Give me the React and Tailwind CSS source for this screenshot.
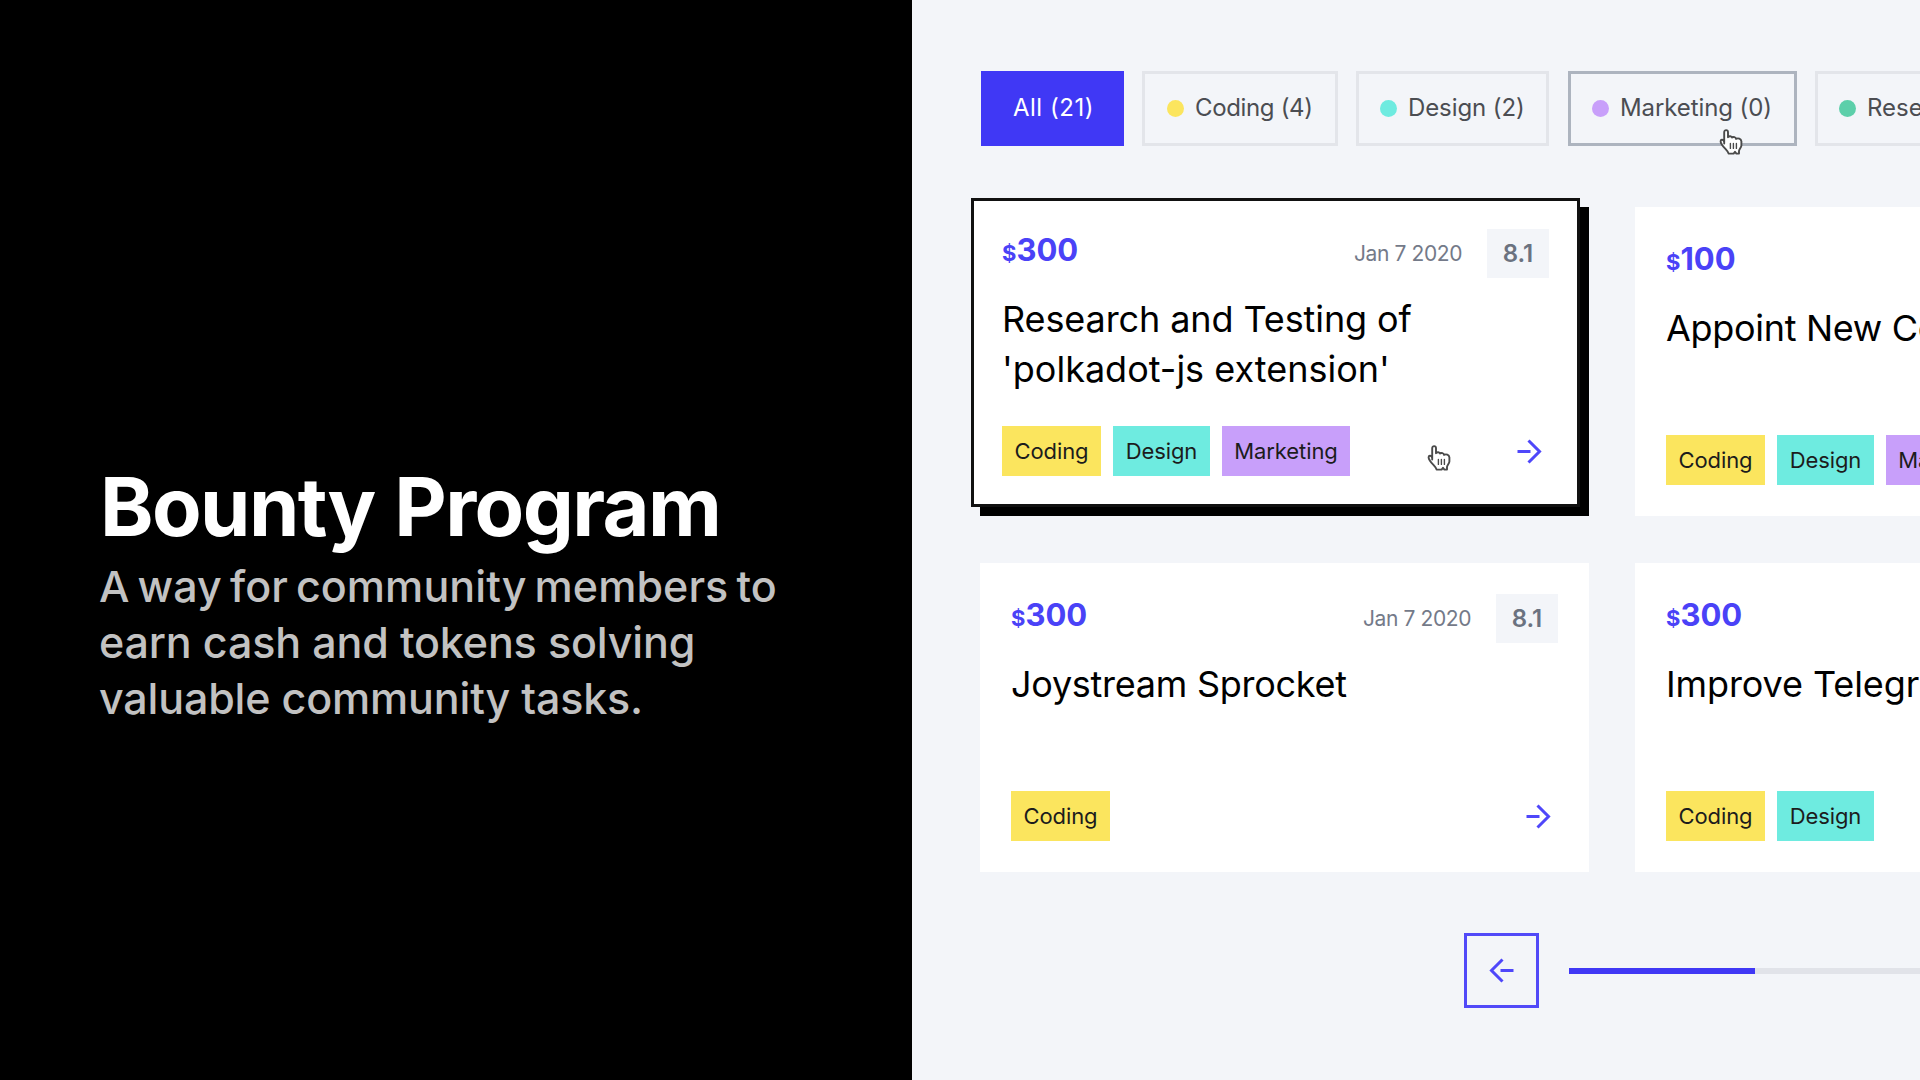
import React from "react";

const TAGS = {
  Coding: "w-[99px] bg-[#fbe55e]",
  Design: "w-[97px] bg-[#6eebe0]",
  Marketing: "w-[128px] bg-[#c89ffa]",
};

const FILTERS = [
  { label: "All (21)", box: "w-[143px] pl-[2px] justify-center bg-[#4038f5] text-white tracking-[0.55px]" },
  { label: "Coding (4)", dot: "bg-[#fbe55e]", box: "w-[196px] pl-[22px] border-[3px] border-[#e3e5ea] tracking-[-0.35px]" },
  { label: "Design (2)", dot: "bg-[#6eebe0]", box: "w-[193px] pl-[21px] border-[3px] border-[#e3e5ea] tracking-[-0.1px]" },
  { label: "Marketing (0)", dot: "bg-[#c89ffa]", box: "w-[229px] ml-px pl-[21px] border-[3px] border-[#adb4bf] tracking-[-0.1px]", hover: true },
  { label: "Research (3)", dot: "bg-[#5ccfaa]", box: "w-[219px] pl-[21px] border-[3px] border-[#e3e5ea]" },
];

const CARDS = [
  {
    amount: "300",
    date: "Jan 7 2020",
    score: "8.1",
    title: "Research and Testing of",
    second: "'polkadot-js extension'",
    tracking: "tracking-[-0.1px]",
    tags: ["Coding", "Design", "Marketing"],
    active: true,
  },
  { amount: "100", title: "Appoint New Council", tracking: "tracking-[-0.3px]", tags: ["Coding", "Design", "Marketing"] },
  { amount: "300", date: "Jan 7 2020", score: "8.1", title: "Joystream Sprocket", tracking: "tracking-[-0.27px]", tags: ["Coding"] },
  { amount: "300", title: "Improve Telegram", tracking: "tracking-[-0.1px]", tags: ["Coding", "Design"] },
];

function Arrow({ className = "" }) {
  return (
    <svg className={className} width="25" height="25" viewBox="0 0 25 25" fill="none" stroke="#4f47fa" strokeWidth="3">
      <path d="M0.5 12.5H13.5" />
      <path d="M11.5 1.5L22.5 12.5L11.5 23.5" />
    </svg>
  );
}

function HandCursor({ className = "" }) {
  return (
    <svg className={className} width="24" height="26" viewBox="0 0 24 26" fill="#fff" stroke="#4a4a4a" strokeWidth="1.9" strokeLinejoin="round" strokeLinecap="round">
      <path d="M5.2 14.5V3.2C5.2 0.4 9 0.4 9 3.2V8.2C10.2 6.6 12.6 7 13 8.6C14.4 7.4 16.8 8 17 9.8C19 8.8 22 9.4 22.4 12.4V16.4C22.4 18.4 20 20.4 20 22V24.6H17.4L16 22.8L14.6 24.6H9.6C9 21.6 5.4 19.6 2.8 15.4C1.4 13.4 1 11 2.8 10.8C4.2 10.7 5 12 5.2 13" />
      <path d="M11.4 14.4V19.4M14.4 14.4V19.4M17.4 14.4V19.4" strokeWidth="1.4" />
    </svg>
  );
}

function Filter({ label, dot, box, hover }) {
  return (
    <button className={`relative flex h-[75px] shrink-0 items-center whitespace-nowrap text-[24px] text-[#4b4d52] ${box}`}>
      {dot && <span className={`mr-[11px] size-[17px] shrink-0 rounded-full ${dot}`} />}
      <span className="pb-[2px]">{label}</span>
      {hover && <HandCursor className="absolute left-[148px] top-[55px]" />}
    </button>
  );
}

function Card({ amount, date, score, title, second, tracking, tags, active }) {
  return (
    <article
      className={`relative flex h-[309px] w-[609px] flex-col bg-white p-[31px] ${
        active ? "-translate-x-[9px] -translate-y-[9px] shadow-[inset_0_0_0_3px_#111,9px_9px_0_0_#000]" : ""
      }`}
    >
      <div className="flex h-[49px] items-start">
        <div className="flex items-baseline font-bold leading-[42px] text-[#4a42f7]">
          <span className="text-[22px]">$</span>
          <span className="text-[31px]">{amount}</span>
        </div>
        {date && (
          <div className="ml-auto flex items-center">
            <span className="mr-[25px] text-[21px] leading-[49px] tracking-[-0.4px] text-[#747a89]">{date}</span>
            <span className="h-[49px] w-[62px] bg-[#f3f5f9] text-center text-[24px] font-semibold leading-[50px] text-[#6b7280]">{score}</span>
          </div>
        )}
      </div>
      <h3 className={`mt-[17px] whitespace-nowrap text-[36px] leading-[49.5px] text-black ${tracking}`}>
        {title}
        {second && <span className="block tracking-normal">{second}</span>}
      </h3>
      <div className="mt-auto flex items-center gap-3">
        {tags.map((tag) => (
          <span key={tag} className={`h-[50px] shrink-0 text-center text-[22px] leading-[50px] tracking-[-0.1px] text-[#1c1c1c] ${TAGS[tag]}`}>
            {tag}
          </span>
        ))}
        {date && <Arrow className="ml-auto mr-[7px]" />}
      </div>
      {active && <HandCursor className="absolute left-[456px] top-[247px]" />}
    </article>
  );
}

export default function App() {
  return (
    <div className="flex h-[1080px] w-[1920px] overflow-hidden bg-black font-['Inter',sans-serif]">
      <section className="w-[912px] shrink-0 bg-black pl-[100px] pt-[462px]">
        <h1 className="whitespace-nowrap text-[81px] font-bold leading-[90px] tracking-[-1.6px] text-white [word-spacing:2px]">Bounty Program</h1>
        <p className="-ml-px mt-[6px] whitespace-nowrap text-[43px] font-medium leading-[56px] text-[#c2c2c2]">
          <span className="block tracking-[0.07px] [word-spacing:-3.5px]">A way for community members to</span>
          <span className="block tracking-[-0.15px]">earn cash and tokens solving</span>
          <span className="block tracking-[-0.17px]">valuable community tasks.</span>
        </p>
      </section>

      <main className="w-[1008px] shrink-0 overflow-hidden bg-[#f3f5f9] pl-[68px] pt-[71px]">
        <div className="ml-px flex gap-[18px]">
          {FILTERS.map((f) => (
            <Filter key={f.label} {...f} />
          ))}
        </div>

        <div className="mt-[61px] grid w-[1264px] grid-cols-[609px_609px] gap-x-[46px] gap-y-[47px]">
          {CARDS.map((c) => (
            <Card key={c.title} {...c} />
          ))}
        </div>

        <div className="ml-[484px] mt-[61px] flex items-center">
          <button className="flex size-[75px] shrink-0 items-center justify-center border-[3px] border-[#5149f8]">
            <Arrow className="rotate-180" />
          </button>
          <div className="ml-[30px] h-[6px] w-[400px] shrink-0 bg-[#e1e3e9]">
            <div className="h-full w-[186px] bg-[#4038f5]" />
          </div>
        </div>
      </main>
    </div>
  );
}
